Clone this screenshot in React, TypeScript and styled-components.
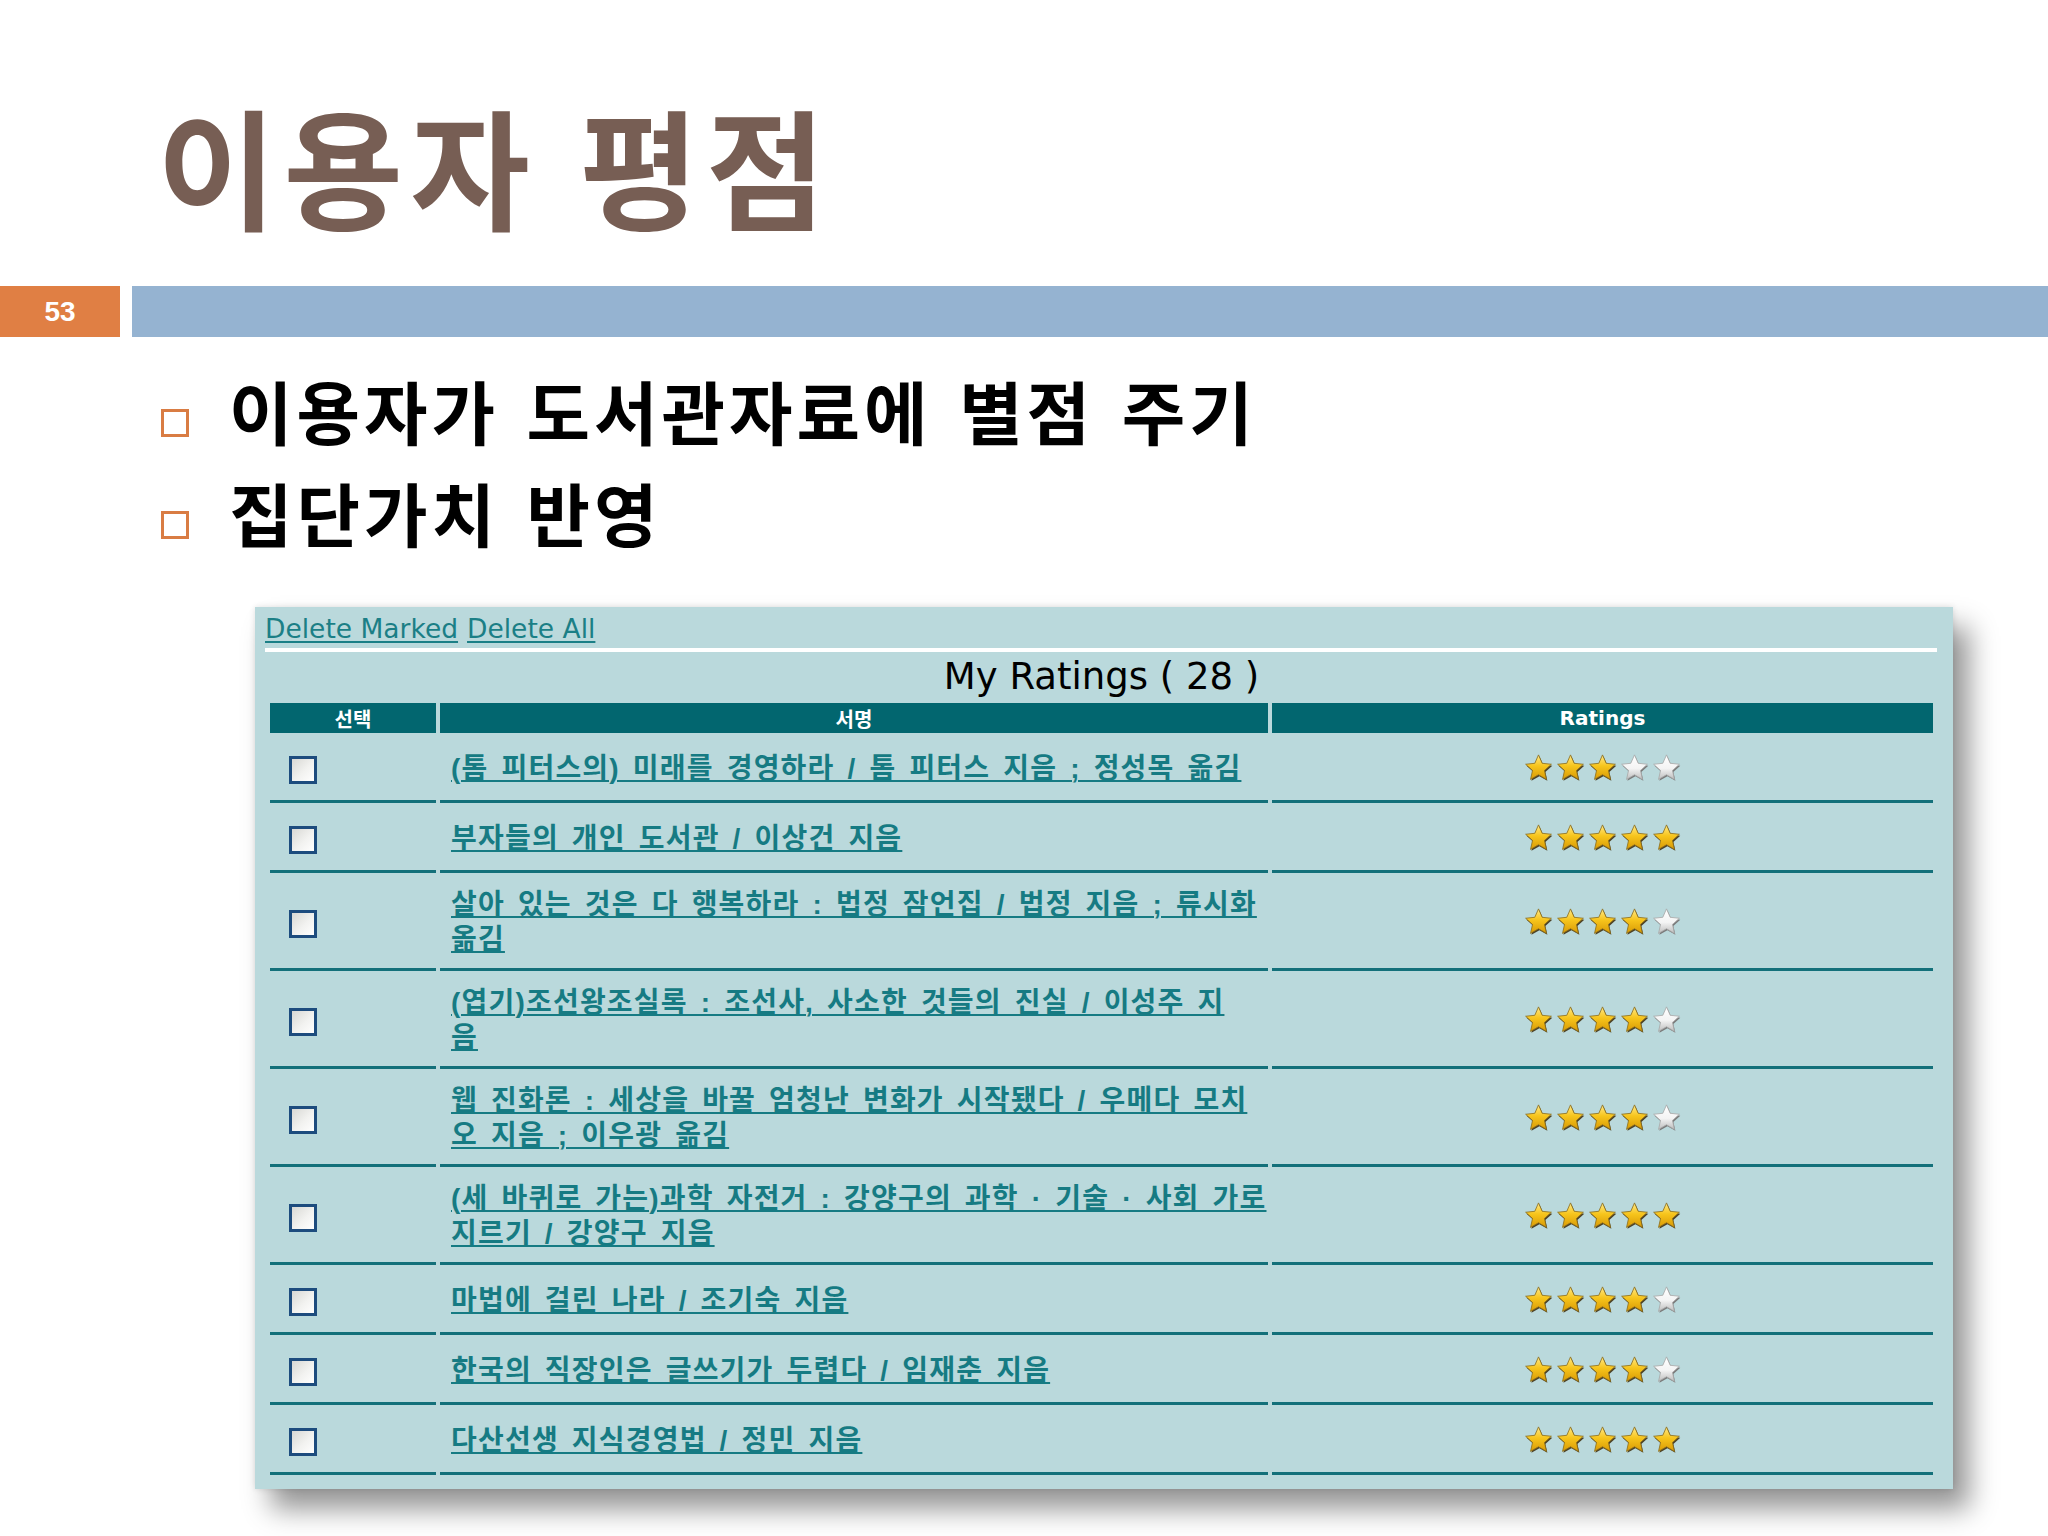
import React from 'react'
import styled, { createGlobalStyle } from 'styled-components'

const GlobalStyle = createGlobalStyle`
  html, body {
    margin: 0;
    padding: 0;
    background: #ffffff;
  }
  body {
    font-family: "Noto Sans CJK KR", "Noto Sans", sans-serif;
  }
`

const Slide = styled.div`
  width: 2048px;
  height: 1536px;
  box-sizing: border-box;
  padding-top: 98px;
  background: #ffffff;
  overflow: hidden;
`

const Title = styled.h1`
  margin: 0 0 0 157px;
  font-family: "Noto Sans CJK KR", sans-serif;
  font-weight: 700;
  font-size: 130px;
  line-height: 130px;
  letter-spacing: 7px;
  word-spacing: 6px;
  color: #775e54;
`

const Band = styled.div`
  display: flex;
  gap: 12px;
  height: 51px;
  margin-top: 58px;
`

const PageNumber = styled.div`
  width: 120px;
  display: flex;
  align-items: center;
  justify-content: center;
  background: #e07f44;
  color: #ffffff;
  font-family: "Liberation Sans", Arial, sans-serif;
  font-weight: 700;
  font-size: 28px;
`

const BandBar = styled.div`
  flex: 1;
  background: #95b3d1;
`

const Bullets = styled.ul`
  list-style: none;
  margin: 22px 0 0 0;
  padding: 0 0 0 161px;
`

const BulletItem = styled.li`
  display: flex;
  align-items: center;
  height: 102px;
  font-family: "Noto Sans CJK KR", sans-serif;
  font-weight: 700;
  font-size: 69px;
  line-height: 102px;
  letter-spacing: 4px;
  word-spacing: 8px;
  color: #000000;
`

const BulletMark = styled.span`
  flex: none;
  width: 28px;
  height: 28px;
  box-sizing: border-box;
  border: 3px solid #d97c43;
  margin: 26px 40px 0 0;
`

const Panel = styled.div`
  width: 1698px;
  box-sizing: border-box;
  margin: 44px 0 0 255px;
  padding: 7px 16px 14px 10px;
  background: #bad9dc;
  box-shadow: 16px 20px 26px rgba(0, 0, 0, 0.42), 0 0 6px rgba(0, 0, 0, 0.12);
`

const Actions = styled.div`
  display: flex;
  gap: 9px;
  font-family: "DejaVu Sans", Verdana, sans-serif;
  font-size: 26.5px;
  line-height: 30px;
`

const ActionLink = styled.a`
  color: #1b7f86;
  text-decoration: underline;
  text-underline-offset: 3px;
`

const Rule = styled.div`
  height: 4px;
  margin-top: 4px;
  background: #ffffff;
`

const Table = styled.div`
  margin: 0 4px 0 5px;
`

const Caption = styled.div`
  margin: 3px 0 4px;
  text-align: center;
  font-family: "DejaVu Sans", Verdana, sans-serif;
  font-size: 37px;
  line-height: 44px;
  color: #000000;
`

const Row = styled.div`
  display: grid;
  grid-template-columns: 166px 828px 661px;
  column-gap: 4px;
`

const HeadCell = styled.div`
  height: 30px;
  display: flex;
  align-items: center;
  justify-content: center;
  background: #02666f;
  color: #ffffff;
  font-family: "DejaVu Sans", "Noto Sans CJK KR", sans-serif;
  font-weight: 700;
  font-size: 20px;
`

const Cell = styled.div<{ $align?: 'start' | 'center' }>`
  display: flex;
  align-items: center;
  justify-content: ${({ $align }) => ($align === 'center' ? 'center' : 'flex-start')};
  padding: 14px 0 11px ${({ $align }) => ($align === 'center' ? '0' : '11px')};
  border-bottom: 3px solid #13707a;
  line-height: 35px;
`

const CheckCell = styled(Cell)`
  padding-left: 19px;
`

const CheckBox = styled.span`
  width: 28px;
  height: 28px;
  margin: 7px 0;
  box-sizing: border-box;
  border: 3px solid #1d4c7e;
  background: linear-gradient(135deg, #d8d8d4 0%, #f2f2f0 55%, #ffffff 100%);
  transform: translateY(2px);
`

const TitleLink = styled.a`
  color: #167b83;
  font-family: "Liberation Sans", "Noto Sans CJK KR", sans-serif;
  font-weight: 700;
  font-size: 28px;
  line-height: 35px;
  letter-spacing: 1.2px;
  word-spacing: 4px;
  white-space: nowrap;
  text-decoration: underline;
  text-decoration-thickness: 2px;
  text-underline-offset: 2px;
`

const StarRow = styled.div`
  display: flex;
  gap: 3px;
`

type Book = { lines: string[]; rating: number }

const books: Book[] = [
  { lines: ['(톰 피터스의) 미래를 경영하라 / 톰 피터스 지음 ; 정성목 옮김'], rating: 3 },
  { lines: ['부자들의 개인 도서관 / 이상건 지음'], rating: 5 },
  { lines: ['살아 있는 것은 다 행복하라 : 법정 잠언집 / 법정 지음 ; 류시화', '옮김'], rating: 4 },
  { lines: ['(엽기)조선왕조실록 : 조선사, 사소한 것들의 진실 / 이성주 지', '음'], rating: 4 },
  { lines: ['웹 진화론 : 세상을 바꿀 엄청난 변화가 시작됐다 / 우메다 모치', '오 지음 ; 이우광 옮김'], rating: 4 },
  { lines: ['(세 바퀴로 가는)과학 자전거 : 강양구의 과학 · 기술 · 사회 가로', '지르기 / 강양구 지음'], rating: 5 },
  { lines: ['마법에 걸린 나라 / 조기숙 지음'], rating: 4 },
  { lines: ['한국의 직장인은 글쓰기가 두렵다 / 임재춘 지음'], rating: 4 },
  { lines: ['다산선생 지식경영법 / 정민 지음'], rating: 5 },
]

const STAR = '16,1 20.1,10.3 30.27,11.36 22.6,18.2 24.82,28.14 16,23 7.18,28.14 9.4,18.2 1.73,11.36 11.9,10.3'

const Star: React.FC<{ filled: boolean }> = ({ filled }) => (
  <svg width="29" height="28" viewBox="0 0 32 31">
    <defs>
      <linearGradient id="starGold" x1="0" y1="0" x2="0" y2="1">
        <stop offset="0" stopColor="#ffe98a" />
        <stop offset="0.45" stopColor="#f7c51c" />
        <stop offset="1" stopColor="#d89a05" />
      </linearGradient>
      <linearGradient id="starWhite" x1="0" y1="0" x2="0" y2="1">
        <stop offset="0" stopColor="#ffffff" />
        <stop offset="0.55" stopColor="#f4f4f4" />
        <stop offset="1" stopColor="#bdbdbd" />
      </linearGradient>
    </defs>
    <polygon points={STAR} transform="translate(1 1.6)" fill={filled ? '#4c4126' : '#7a7a7a'} />
    <polygon
      points={STAR}
      fill={filled ? 'url(#starGold)' : 'url(#starWhite)'}
      stroke={filled ? '#8a6d1c' : '#a8a8a8'}
      strokeWidth="0.9"
      strokeLinejoin="round"
    />
  </svg>
)

const Stars: React.FC<{ value: number }> = ({ value }) => (
  <StarRow>
    {[0, 1, 2, 3, 4].map((i) => (
      <Star key={i} filled={i < value} />
    ))}
  </StarRow>
)

export default function App() {
  return (
    <>
      <GlobalStyle />
      <Slide>
        <Title>이용자 평점</Title>
        <Band>
          <PageNumber>53</PageNumber>
          <BandBar />
        </Band>
        <Bullets>
          <BulletItem>
            <BulletMark />
            이용자가 도서관자료에 별점 주기
          </BulletItem>
          <BulletItem>
            <BulletMark />
            집단가치 반영
          </BulletItem>
        </Bullets>
        <Panel>
          <Actions>
            <ActionLink href="#">Delete Marked</ActionLink>
            <ActionLink href="#">Delete All</ActionLink>
          </Actions>
          <Rule />
          <Table>
            <Caption>My Ratings ( 28 )</Caption>
            <Row>
              <HeadCell>선택</HeadCell>
              <HeadCell>서명</HeadCell>
              <HeadCell>Ratings</HeadCell>
            </Row>
            {books.map((book, i) => (
              <Row key={i}>
                <CheckCell>
                  <CheckBox />
                </CheckCell>
                <Cell>
                  <TitleLink href="#">
                    {book.lines.map((line, j) => (
                      <React.Fragment key={j}>
                        {j > 0 && <br />}
                        {line}
                      </React.Fragment>
                    ))}
                  </TitleLink>
                </Cell>
                <Cell $align="center">
                  <Stars value={book.rating} />
                </Cell>
              </Row>
            ))}
          </Table>
        </Panel>
      </Slide>
    </>
  )
}
